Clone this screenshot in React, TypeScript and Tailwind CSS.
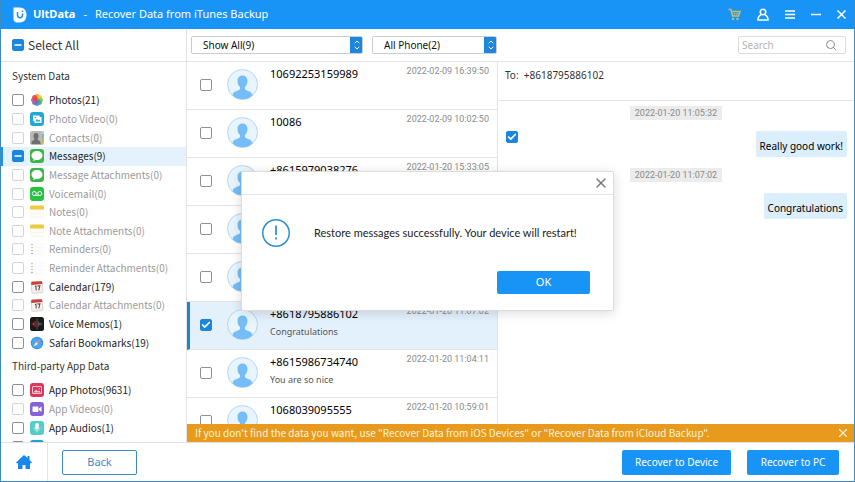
import { useEffect, useRef, useState } from 'react';
import { Check, ChevronDown, ChevronUp, Minus, Search, X } from 'lucide-react';

type CheckState = 'on' | 'off' | 'mixed';

interface CategoryDef {
  name: string;
  count: number;
  icon: React.ReactNode;
  state?: CheckState;
}

interface Thread {
  number?: string;
  time?: string;
  preview?: string;
  selected?: boolean;
}

const svgProps = { viewBox: '0 0 28 28', className: 'size-[14px] shrink-0', 'aria-hidden': true };

function PhotosIcon() {
  const petals = ['#f7941d', '#f9c921', '#8cc63f', '#3fae6b', '#3b8fd0', '#7a63b5', '#c0559b', '#ee3d3d'];
  return (
    <svg {...svgProps}>
      {petals.map((c, i) => (
        <ellipse key={c} cx="14" cy="8" rx="4.5" ry="6" fill={c} fillOpacity="0.9" transform={`rotate(${i * 45} 14 14)`} />
      ))}
    </svg>
  );
}

function PhotoVideoIcon() {
  return (
    <svg {...svgProps}>
      <rect width="28" height="28" rx="6" fill="#21a9cf" />
      <path d="M6 7h13v3h4v12H9v-4H6z" fill="#fff" />
      <path d="M11 18l3-4 3 3 2-2 2 4H11z" fill="#21a9cf" />
      <circle cx="11" cy="11" r="1.5" fill="#21a9cf" />
    </svg>
  );
}

function ContactsIcon() {
  return (
    <svg {...svgProps}>
      <rect width="28" height="28" rx="5" fill="#b9b9b9" />
      <rect x="23" width="5" height="9" fill="#c9c9c9" />
      <rect x="24" y="6" width="3" height="6" fill="#6fb1dc" />
      <rect x="24" y="12" width="3" height="6" fill="#8ac66a" />
      <rect x="24" y="18" width="3" height="6" fill="#e9a646" />
      <path d="M12 4c4 0 5 3 5 6 0 3-1 5-2 6 0 3 6 2 6 8v2H3v-2c0-6 6-5 6-8-1-1-2-3-2-6 0-3 1-6 5-6z" fill="#6f6f6f" />
    </svg>
  );
}

function MessageIcon() {
  return (
    <svg {...svgProps}>
      <rect width="28" height="28" rx="6" fill="#3fb549" />
      <path d="M14 4c6 0 11 4 11 9s-5 9-11 9c-1 0-2 0-3-.4C10 23 8 24 6 24c1-1 1.5-2.500 1.500-3.500C5 19 3 16 3 13c0-5 5-9 11-9z" fill="#fff" />
    </svg>
  );
}

function VoicemailIcon() {
  return (
    <svg {...svgProps}>
      <rect width="28" height="28" rx="6" fill="#27c23f" />
      <g fill="none" stroke="#fff" strokeWidth="2">
        <circle cx="8.500" cy="13" r="4" />
        <circle cx="19.500" cy="13" r="4" />
        <path d="M8.500 17h11" />
      </g>
    </svg>
  );
}

function NotesIcon() {
  return (
    <svg {...svgProps}>
      <rect width="28" height="28" rx="3" fill="#fdfcf8" />
      <path d="M0 9V4q0-3 3-3h22q3 0 3 3v5z" fill="#eccb3e" />
      <path d="M1 17h26M1 24h26" stroke="#eeece4" />
    </svg>
  );
}

function RemindersIcon() {
  return (
    <svg {...svgProps}>
      <rect width="28" height="28" rx="5" fill="#fdfdfd" />
      <path d="M9 4h17M9 11h17M9 18h17M9 25h17" stroke="#f0f0f0" />
      <circle cx="4" cy="5" r="1.500" fill="#b9a28a" />
      <circle cx="4" cy="11" r="1.500" fill="#e2b04c" />
      <circle cx="4" cy="17" r="1.500" fill="#9fb27c" />
      <circle cx="4" cy="23" r="1.500" fill="#8c8c8c" />
    </svg>
  );
}

function CalendarIcon() {
  return (
    <svg {...svgProps}>
      <g transform="rotate(-4 14 14)">
        <rect x="3" y="3" width="22" height="23" rx="2" fill="#f4f1f1" stroke="#b9b0b0" />
        <path d="M3 9V5q0-2 2-2h18q2 0 2 2v4z" fill="#cf3f38" />
        <path d="M10 13l2-1v9M15 12h5l-3 9" fill="none" stroke="#5b3b3b" strokeWidth="2" />
      </g>
    </svg>
  );
}

function VoiceMemosIcon() {
  return (
    <svg {...svgProps}>
      <rect width="28" height="28" rx="5" fill="#17191c" />
      <path d="M3 14h8M7 11v6M10 8v12" stroke="#d6343c" strokeWidth="1.500" />
      <path d="M14 3v22" stroke="#c8414a" strokeWidth="1.500" />
      <path d="M17 9v10M20 11v6M17 14h8" stroke="#6b6f75" strokeWidth="1.500" />
    </svg>
  );
}

function SafariIcon() {
  return (
    <svg {...svgProps}>
      <circle cx="14" cy="14" r="12.500" fill="#3c8fdf" />
      <circle cx="14" cy="14" r="10.500" fill="#4ba6ea" />
      <path d="M21 7l-5 9-4-4z" fill="#e0807f" />
      <path d="M7 21l5-9 4 4z" fill="#e8f3fc" />
    </svg>
  );
}

function AppPhotosIcon() {
  return (
    <svg {...svgProps}>
      <rect width="28" height="28" rx="6" fill="#dd3459" />
      <rect x="5" y="7" width="18" height="14" rx="1" fill="none" stroke="#f7c9d3" strokeWidth="2" />
      <path d="M7 19l5-6 4 4 2-2 4 4z" fill="#f7c9d3" />
      <circle cx="18.500" cy="11.500" r="1.500" fill="#f7c9d3" />
    </svg>
  );
}

function AppVideosIcon() {
  return (
    <svg {...svgProps}>
      <rect width="28" height="28" rx="6" fill="#8562d8" />
      <rect x="5" y="9" width="12" height="11" rx="2" fill="#fff" />
      <path d="M18 13l5-4v11l-5-4z" fill="#fff" />
    </svg>
  );
}

function AppAudiosIcon() {
  return (
    <svg {...svgProps}>
      <rect width="28" height="28" rx="6" fill="#58cbc6" />
      <rect x="10.500" y="4" width="7" height="13" rx="3.500" fill="#fff" />
      <path d="M8 13c0 8 12 8 12 0M14 19v4" fill="none" stroke="#d5f5f2" strokeWidth="1.500" />
    </svg>
  );
}

function AppDocumentsIcon() {
  return (
    <svg {...svgProps}>
      <rect width="28" height="28" rx="6" fill="#1e9fd6" />
      <path d="M8 6h9l4 4v13H8z" fill="#fff" />
    </svg>
  );
}

const SYSTEM_DATA: CategoryDef[] = [
  { name: 'Photos', count: 21, icon: <PhotosIcon /> },
  { name: 'Photo Video', count: 0, icon: <PhotoVideoIcon /> },
  { name: 'Contacts', count: 0, icon: <ContactsIcon /> },
  { name: 'Messages', count: 9, icon: <MessageIcon />, state: 'mixed' },
  { name: 'Message Attachments', count: 0, icon: <MessageIcon /> },
  { name: 'Voicemail', count: 0, icon: <VoicemailIcon /> },
  { name: 'Notes', count: 0, icon: <NotesIcon /> },
  { name: 'Note Attachments', count: 0, icon: <NotesIcon /> },
  { name: 'Reminders', count: 0, icon: <RemindersIcon /> },
  { name: 'Reminder Attachments', count: 0, icon: <RemindersIcon /> },
  { name: 'Calendar', count: 179, icon: <CalendarIcon /> },
  { name: 'Calendar Attachments', count: 0, icon: <CalendarIcon /> },
  { name: 'Voice Memos', count: 1, icon: <VoiceMemosIcon /> },
  { name: 'Safari Bookmarks', count: 19, icon: <SafariIcon /> },
];

const APP_DATA: CategoryDef[] = [
  { name: 'App Photos', count: 9631, icon: <AppPhotosIcon /> },
  { name: 'App Videos', count: 0, icon: <AppVideosIcon /> },
  { name: 'App Audios', count: 1, icon: <AppAudiosIcon /> },
];

const THREADS: Thread[] = [
  { number: '10692253159989', time: '2022-02-09 16:39:50' },
  { number: '10086', time: '2022-02-09 10:02:50' },
  { number: '+8615979038276', time: '2022-01-20 15:33:05' },
  {},
  {},
  { number: '+8618795886102', time: '2022-01-20 11:07:02', preview: 'Congratulations', selected: true },
  { number: '+8615986734740', time: '2022-01-20 11:04:11', preview: 'You are so nice' },
  { number: '1068039095555', time: '2022-01-20 10:59:01' },
];

const MESSAGES = [
  { time: '2022-01-20 11:05:32', text: 'Really good work!', picked: true },
  { time: '2022-01-20 11:07:02', text: 'Congratulations', picked: false },
];

function Checkbox({ initial = 'off', label, id, faint }: { initial?: CheckState; label?: string; id?: string; faint?: boolean }) {
  const [state, setState] = useState<CheckState>(initial);
  const ref = useRef<HTMLInputElement>(null);

  useEffect(() => {
    if (ref.current) ref.current.indeterminate = state === 'mixed';
  }, [state]);

  const filled = state !== 'off';
  return (
    <span className="relative flex size-3 shrink-0">
      <input
        ref={ref}
        id={id}
        type="checkbox"
        aria-label={label}
        checked={state === 'on'}
        onChange={() => setState(filled ? 'off' : 'on')}
        className={`size-3 appearance-none rounded-xs border ${
          filled ? 'border-[#1c86dc] bg-[#1c86dc]' : faint ? 'border-[#d4d4d4] bg-white' : 'border-[#909090] bg-white'
        }`}
      />
      {state === 'on' && <Check className="pointer-events-none absolute inset-0 size-3 p-px text-white" strokeWidth={4} />}
      {state === 'mixed' && <Minus className="pointer-events-none absolute inset-0 size-3 p-px text-white" strokeWidth={4} />}
    </span>
  );
}

function CategoryRow({ item }: { item: CategoryDef }) {
  const id = `cat-${item.name.toLowerCase().replace(/ /g, '-')}`;
  const active = item.state === 'mixed';
  return (
    <li className={`flex items-center border-l-2 pl-[9px] ${active ? 'border-[#1794f6] bg-[#e5f2fd]' : 'border-transparent'}`}>
      <Checkbox id={id} initial={item.state} faint={item.count === 0} />
      <label htmlFor={id} className={`flex items-center gap-[5px] pl-[6px] leading-4 ${item.count === 0 ? 'text-[#9a9a9a]' : 'text-[#1c1c1c]'}`}>
        {item.icon}
        <span className="whitespace-nowrap">{item.name}({item.count})</span>
      </label>
    </li>
  );
}

function Dropdown({ label, text, className }: { label: string; text: string; className: string }) {
  return (
    <div className={`relative flex h-[18px] overflow-hidden rounded-xs border border-[#c8ccd0] ${className}`}>
      <select aria-label={label} className="w-full appearance-none bg-white pl-[11px] text-[10px] leading-4 text-[#111]">
        <option>{text}</option>
      </select>
      <span className="pointer-events-none absolute -inset-y-px -right-px flex w-[13px] flex-col items-center justify-center bg-[#1c86dc] text-white">
        <ChevronUp className="-mb-px size-2" strokeWidth={3} />
        <ChevronDown className="-mt-px size-2" strokeWidth={3} />
      </span>
    </div>
  );
}

function Avatar() {
  return (
    <svg viewBox="0 0 62 62" className="size-[31px] shrink-0" aria-hidden>
      <circle cx="31" cy="31" r="30" fill="#e9f5fe" stroke="#a3c9e6" strokeWidth="1.500" />
      <path
        d="M31 13c7 0 10 5 10 11 0 5-2 9-5 12v4c2 4 14 4 15 12-5 6-12 8.500-20 8.500S16 58 11 52c1-8 13-8 15-12v-4c-3-3-5-7-5-12 0-6 3-11 10-11z"
        fill="#74bdf6"
      />
    </svg>
  );
}

function ThreadRow({ thread }: { thread: Thread }) {
  return (
    <li
      className={`flex h-12 shrink-0 items-start border-b border-[#e3e3e3] ${
        thread.selected ? 'border-l-3 border-l-[#1c86c9] bg-[#e3f1fd] pl-[10px]' : 'bg-white pl-[13px]'
      }`}
    >
      <div className="pt-[17px]">
        <Checkbox initial={thread.selected ? 'on' : 'off'} label={`Select ${thread.number ?? 'conversation'}`} />
      </div>
      <div className="pt-[7px] pl-[15px]">
        <Avatar />
      </div>
      <div className="min-w-0 flex-1 pt-1 pl-3">
        <p className="text-[11px] leading-4 text-black">{thread.number}</p>
        {thread.preview && <p className="truncate pt-[2px] text-[9px] leading-4 text-[#555]">{thread.preview}</p>}
      </div>
      <time className="pt-[3px] pr-2 font-[Roboto,sans-serif] text-[9px] leading-3 whitespace-nowrap text-[#8a8a8a]">{thread.time}</time>
    </li>
  );
}

function TitleBar() {
  return (
    <header className="flex h-[29px] shrink-0 items-center bg-[#1794f6] pr-2 pl-3 text-white">
      <svg viewBox="0 0 28 32" className="h-4 w-[14px]" aria-hidden>
        <path d="M1 1h12c9 0 14 6 14 15s-5 15-14 15H8c-4 0-7-3-7-7z" fill="#fff" />
        <path d="M9 10v6c0 7 10 7 10 0v-3M19 7v3" fill="none" stroke="#1794f6" strokeWidth="3" />
      </svg>
      <h1 className="flex items-center pl-[6px] text-[11px]">
        <span className="font-bold">UltData</span>
        <span className="px-2">-</span>
        <span>Recover Data from iTunes Backup</span>
      </h1>
      <div className="ml-auto flex items-center gap-4">
        <button aria-label="Store">
          <svg viewBox="0 0 26 26" className="size-[13px]" fill="none" stroke="#c9bd6a" strokeWidth="3" aria-hidden>
            <path d="M1 3h5l3 13h12l3-9H8M13 10v3M18 10v3" />
            <circle cx="10" cy="22" r="1" />
            <circle cx="19" cy="22" r="1" />
          </svg>
        </button>
        <button aria-label="Account">
          <svg viewBox="0 0 24 26" className="h-[13px] w-3" fill="none" stroke="#fff" strokeWidth="3" aria-hidden>
            <circle cx="12" cy="8" r="5.500" />
            <path d="M8 14c-4 1-6 4-6 10h20c0-6-2-9-6-10" />
          </svg>
        </button>
        <button aria-label="Menu">
          <svg viewBox="0 0 20 18" className="h-[9px] w-[10px]" stroke="#fff" strokeWidth="3" aria-hidden>
            <path d="M0 2h20M0 9h20M0 16h20" />
          </svg>
        </button>
        <button aria-label="Minimize">
          <svg viewBox="0 0 20 18" className="h-[9px] w-[10px]" stroke="#fff" strokeWidth="3" aria-hidden>
            <path d="M0 9h20" />
          </svg>
        </button>
        <button aria-label="Close">
          <svg viewBox="0 0 18 18" className="size-[9px]" stroke="#fff" strokeWidth="3" aria-hidden>
            <path d="M1 1l16 16M17 1L1 17" />
          </svg>
        </button>
      </div>
    </header>
  );
}

function Sidebar() {
  return (
    <aside className="flex w-[186px] shrink-0 flex-col border-r border-[#e3e3e3] font-['Noto_Sans_CJK_SC',sans-serif]">
      <div className="flex h-[33px] shrink-0 items-center gap-1 border-b border-[#e3e3e3] pl-[11px] text-[#333]">
        <Checkbox id="select-all" initial="mixed" />
        <label htmlFor="select-all" className="text-[12px] leading-4">Select All</label>
      </div>
      <div className="min-h-0 flex-1 overflow-hidden text-[10px]">
        <h2 className="pt-[6px] pb-[7px] pl-[11px] leading-4 text-[#333]">System Data</h2>
        <ul className="grid h-[261px] auto-rows-fr">
          {SYSTEM_DATA.map(item => <CategoryRow key={item.name} item={item} />)}
        </ul>
        <h2 className="pt-[6px] pb-[7px] pl-[11px] leading-4 text-[#333]">Third-party App Data</h2>
        <ul className="grid h-[75px] auto-rows-fr">
          {APP_DATA.map(item => <CategoryRow key={item.name} item={item} />)}
          <li className="flex items-center gap-[6px] pl-[11px]">
            <Checkbox label="App Documents" />
            <AppDocumentsIcon />
          </li>
        </ul>
      </div>
    </aside>
  );
}

function Toolbar() {
  return (
    <div className="flex h-[33px] shrink-0 items-center border-b border-[#e3e3e3] pr-2 pl-1">
      <Dropdown label="Message filter" text="Show All(9)" className="w-[172px]" />
      <Dropdown label="Phone filter" text="All Phone(2)" className="ml-[9px] w-[125px]" />
      <div className="ml-auto flex h-[18px] w-[108px] items-center rounded-xs border border-[#dcdcdc] pr-2 pl-[3px]">
        <input type="search" aria-label="Search" placeholder="Search" className="w-full min-w-0 text-[10px] outline-none placeholder:text-[#b4b4b4]" />
        <Search className="size-3 shrink-0 text-[#8a8a8a]" />
      </div>
    </div>
  );
}

function Conversation() {
  return (
    <section className="flex min-w-0 flex-1 flex-col">
      <h2 className="h-[39px] shrink-0 border-b border-[#e3e3e3] pt-[5px] pl-[7px] text-[10px] leading-4 text-[#333]">
        To:&nbsp; +8618795886102
      </h2>
      <ul className="flex flex-col gap-[11px] pt-[5px]">
        {MESSAGES.map(m => (
          <li key={m.time} className="flex flex-col gap-[11px]">
            <time className="self-center bg-[#ececec] px-[5px] font-[Roboto,sans-serif] text-[9px] leading-[14px] text-[#8a8a8a]">{m.time}</time>
            <div className="flex items-start justify-between pr-[7px] pl-2">
              <div>{m.picked && <Checkbox initial="on" label={`Select ${m.text}`} />}</div>
              <p className="h-[26px] rounded-xs bg-[#dbeefc] px-1 pt-[6px] text-[10px] leading-[18px] text-black">{m.text}</p>
            </div>
          </li>
        ))}
      </ul>
    </section>
  );
}

function RestoreDialog({ onClose }: { onClose: () => void }) {
  return (
    <div className="absolute inset-0 flex items-center justify-center">
      <div role="dialog" aria-label="Restore" className="w-[373px] rounded-xs border border-[#dcdcdc] bg-white shadow-[0_2px_12px_rgba(0,0,0,0.15)]">
        <div className="flex h-[23px] items-center justify-end border-b border-[#e3e3e3] pr-1">
          <button aria-label="Close dialog" onClick={onClose}>
            <X className="size-4 text-[#777]" strokeWidth={2} />
          </button>
        </div>
        <div className="flex items-center pt-6 pl-5">
          <svg viewBox="0 0 56 56" className="size-7 shrink-0" fill="none" stroke="#2d8fd0" aria-hidden>
            <circle cx="28" cy="28" r="26.500" strokeWidth="3" />
            <path d="M28 13v19" strokeWidth="3.500" />
            <circle cx="28" cy="39" r="0.800" strokeWidth="3" />
          </svg>
          <p className="pl-6 font-[Lato,sans-serif] text-[11px] leading-4 text-[#222]">
            Restore messages successfully. Your device will restart!
          </p>
        </div>
        <div className="flex justify-end pt-6 pr-[23px] pb-4">
          <button onClick={onClose} className="h-[23px] w-[93px] rounded-xs bg-[#1794f6] text-[11px] text-white">OK</button>
        </div>
      </div>
    </div>
  );
}

export default function App() {
  const [dialogOpen, setDialogOpen] = useState(true);
  const [hintOpen, setHintOpen] = useState(true);

  return (
    <div className="relative flex h-screen flex-col overflow-hidden border-x border-b border-[#3c8cc4] bg-white font-['Noto_Sans','Open_Sans',sans-serif]">
      <TitleBar />
      <main className="flex min-h-0 flex-1">
        <Sidebar />
        <div className="flex min-w-0 flex-1 flex-col">
          <Toolbar />
          <div className="flex min-h-0 flex-1">
            <ul className="flex w-[311px] shrink-0 flex-col overflow-hidden border-r border-[#e3e3e3]">
              {THREADS.map((t, i) => <ThreadRow key={i} thread={t} />)}
            </ul>
            <Conversation />
          </div>
          {hintOpen && (
            <div className="flex h-[18px] shrink-0 items-center justify-between bg-[#e89a1c] pr-1 pl-2 text-[#fdf3dd]">
              <p className="font-['Noto_Sans_CJK_SC',sans-serif] text-[10px] leading-4 whitespace-nowrap">
                If you don't find the data you want, use "Recover Data from iOS Devices" or "Recover Data from iCloud Backup".
              </p>
              <button aria-label="Dismiss hint" onClick={() => setHintOpen(false)}>
                <X className="size-[14px]" strokeWidth={2} />
              </button>
            </div>
          )}
        </div>
      </main>
      <footer className="flex h-[39px] shrink-0 items-center border-t border-[#dfe3e6] pr-[15px]">
        <button aria-label="Home" className="flex h-full w-[47px] items-center justify-center border-r border-[#e3e3e3]">
          <svg viewBox="0 0 32 28" className="h-[14px] w-4" fill="#1788ea" aria-hidden>
            <path d="M16 0l7 6V2h4v8l5 5-2 2-2-1v12h-9v-8h-6v8H4V16l-2 1-2-2z" />
          </svg>
        </button>
        <button className="ml-[14px] h-[25px] w-[75px] rounded-xs border border-[#3c8cc4] text-[11px] text-[#3c8cc4]">Back</button>
        <div className="ml-auto flex gap-4">
          <button className="h-[25px] w-[109px] rounded-xs bg-[#1794f6] text-[10px] text-white">Recover to Device</button>
          <button className="h-[25px] w-[92px] rounded-xs bg-[#1794f6] text-[10px] text-white">Recover to PC</button>
        </div>
      </footer>
      {dialogOpen && <RestoreDialog onClose={() => setDialogOpen(false)} />}
    </div>
  );
}
